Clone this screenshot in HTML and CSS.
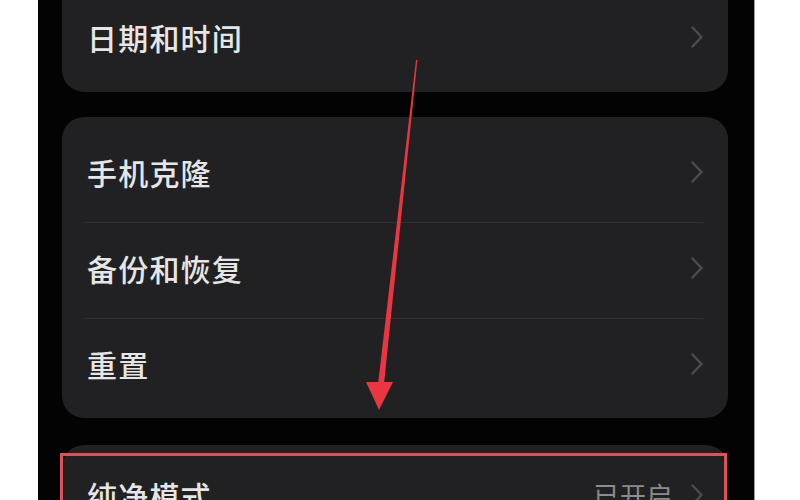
FILE: index.html
```html
<!DOCTYPE html>
<html lang="zh-CN">
<head>
<meta charset="utf-8">
<title>设置</title>
<link rel="stylesheet" href="styles.css">
</head>
<body>
<div class="page">
  <div class="screen">
    <div class="card card-first">
      <div class="row">
        <span class="label">日期和时间</span>
        <svg class="chev" viewBox="0 0 12 22" width="12" height="22"><polyline points="1.5,1.5 10.5,11 1.5,20.5"/></svg>
      </div>
    </div>
    <div class="card card-mid">
      <div class="row">
        <span class="label">手机克隆</span>
        <svg class="chev" viewBox="0 0 12 22" width="12" height="22"><polyline points="1.5,1.5 10.5,11 1.5,20.5"/></svg>
      </div>
      <div class="sep"></div>
      <div class="row">
        <span class="label">备份和恢复</span>
        <svg class="chev" viewBox="0 0 12 22" width="12" height="22"><polyline points="1.5,1.5 10.5,11 1.5,20.5"/></svg>
      </div>
      <div class="sep"></div>
      <div class="row">
        <span class="label">重置</span>
        <svg class="chev" viewBox="0 0 12 22" width="12" height="22"><polyline points="1.5,1.5 10.5,11 1.5,20.5"/></svg>
      </div>
    </div>
    <div class="card card-last">
      <div class="row">
        <span class="label">纯净模式</span>
        <span class="value">已开启</span>
        <svg class="chev" viewBox="0 0 12 22" width="12" height="22"><polyline points="1.5,1.5 10.5,11 1.5,20.5"/></svg>
      </div>
    </div>
  </div>
  <svg class="annot" viewBox="0 0 800 500" width="800" height="500">
    <polygon class="arrow" points="416,60 417.4,60 383.8,386 377.8,386"/>
    <polygon class="arrow" points="366,382 393,382 379,410"/>
    <rect class="box" x="61.5" y="454.5" width="664" height="80"/>
  </svg>
</div>
</body>
</html>
```

FILE: styles.css
```css
html, body {
  margin: 0;
  padding: 0;
  background: #ffffff;
}

.page {
  position: relative;
  width: 800px;
  height: 500px;
  overflow: hidden;
  font-family: "Noto Sans CJK SC", "Noto Sans", sans-serif;
}

.screen {
  margin-left: 38px;
  width: 716px;
  height: 500px;
  background: #030303;
  border-right: 1px solid #9a9a9a;
  overflow: hidden;
  display: flex;
  flex-direction: column;
}

.card {
  margin: 0 26px 0 24px;
  background: #212123;
  border-radius: 22px;
  flex-shrink: 0;
}

.card-first {
  margin-top: -8px;
  padding-bottom: 5px;
  border-top-left-radius: 0;
  border-top-right-radius: 0;
}

.card-mid {
  margin-top: 25px;
  padding: 10px 0 4px;
}

.card-last {
  margin-top: 27px;
  padding-top: 5px;
}

.row {
  box-sizing: border-box;
  height: 95px;
  display: flex;
  align-items: center;
  padding: 0 25px 6px 25px;
}

.label {
  flex: 1;
  color: #e6e6e6;
  font-size: 30px;
  font-weight: 500;
  letter-spacing: 1.2px;
}

.value {
  color: #8c8c8e;
  font-size: 26px;
  margin-right: 18px;
  letter-spacing: 0.5px;
}

.chev {
  flex-shrink: 0;
}

.chev polyline {
  fill: none;
  stroke: #4c4c4f;
  stroke-width: 2.4;
  stroke-linecap: round;
  stroke-linejoin: round;
}

.sep {
  height: 1px;
  background: #2f2f31;
  margin: 0 25px 0 22px;
}

.annot {
  position: absolute;
  left: 0;
  top: 0;
  pointer-events: none;
}

.arrow {
  fill: #ea3640;
}

.box {
  fill: none;
  stroke: #d9525c;
  stroke-width: 3;
}
```
